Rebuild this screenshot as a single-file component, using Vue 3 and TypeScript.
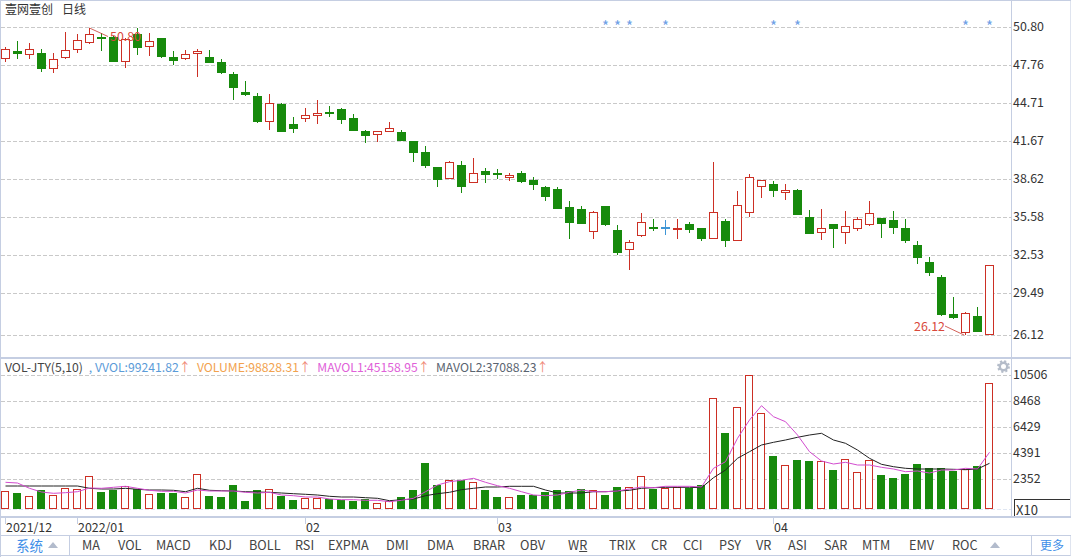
<script setup lang="ts">
type K = [number, number, number, number, string]

const candles: K[] = [
  [46.7,61.7,49.3,58.7,'r'],[41.3,58.7,51,53.7,'g'],[42.7,58.7,49.3,55.3,'r'],[49.3,71.7,53.3,68.7,'g'],[53.3,72.7,59.3,69.3,'r'],
  [32,58.7,49.7,58.3,'r'],[34,52.7,40.3,49.7,'r'],[27.7,44,34.3,42.7,'r'],[33.3,50.7,37,39,'g'],[36,62,37,62,'g'],
  [38,67.7,39.3,62.3,'r'],[28.3,55,34,48,'g'],[33,55.7,41.3,47.3,'r'],[38,57.7,38,56.7,'g'],[51,64.7,57,61,'g'],
  [50,60,54.3,58.7,'r'],[48.7,76.7,51.3,54.3,'r'],[50,63.3,57,62.7,'g'],[59.3,74,62,72.7,'g'],[72,99.7,74,87.7,'g'],
  [81.3,95.7,92,95,'g'],[93.3,122.7,96.3,121.7,'g'],[94.3,129.7,103.3,122.3,'r'],[103.3,132,104,131.7,'g'],[117.3,132.7,124,128.7,'g'],
  [108.3,121.7,115.3,118.7,'r'],[100,124,113,116.3,'r'],[106,117.3,112,112.7,'g'],[107.7,124,109.3,119.7,'g'],[114,130.7,118,130.7,'g'],
  [130,142.7,131,136,'g'],[131,141.7,131.3,135.3,'r'],[121.7,131.7,128.3,131.7,'r'],[130,141,132,140.7,'g'],[141.3,161.7,141.3,152.7,'g'],
  [145.7,168.3,152,165.7,'g'],[167.3,186.7,167.3,180,'g'],[161,179,162.3,178.7,'r'],[161,192.7,165,186.7,'g'],[158.3,182.7,172.7,182.7,'r'],
  [168.3,182.7,171,175,'g'],[169.3,179.3,173.3,175,'g'],[172.7,180.7,175.3,177.7,'r'],[170.7,182.7,172.7,182,'g'],[176.7,190,180,185,'g'],
  [186,201,187,196.7,'g'],[187.3,209,189.3,209,'g'],[201,239,207,222.7,'g'],[206,224,209,224,'g'],[211,238.7,212.3,232.3,'r'],
  [206,226,206,225,'g'],[225,255,230.3,252.7,'g'],[240,270,242.3,250.3,'r'],[212.7,236.7,222.3,236.3,'r'],[219.3,230.7,227.3,228.3,'g'],
  [220.3,235,227.3,228.3,'b'],[219,238.7,228.3,230.3,'r'],[222,233.3,224,229.7,'g'],[228,241,228,239,'g'],[161.7,239.3,212.3,239,'r'],
  [219.3,246.7,221,240.7,'g'],[191,240.7,205.3,240.7,'r'],[174.3,216.7,177.3,212.7,'r'],[180,198,180.3,187.3,'r'],[181.3,196.7,184,190.7,'g'],
  [184.3,200,190.3,192.7,'r'],[189.3,215,190,214.7,'g'],[210,234.3,217.3,233.7,'g'],[209,239.7,228.3,232.7,'r'],[224,247.7,224,228.7,'g'],
  [211,243.7,226.3,233.3,'r'],[217.3,230.7,219.3,228.7,'r'],[201,225.7,213.3,225.3,'r'],[218,238,218,223.7,'g'],[211,234.3,220,227.7,'g'],
  [219,242.7,228,240.7,'g'],[241.3,263.7,245,257.7,'g'],[257.3,275.7,262,272.7,'g'],[275.3,315.7,277,314.7,'g'],[297.3,319.3,314,318,'g'],
  [311.7,335,313.3,333.3,'r'],[307,331.7,316,331.7,'g'],[265.3,335.3,265.3,335.3,'r']
]

const volTops = [
  491,493,496.3,490,495,488.3,489.3,476.3,491.7,490,486.3,489,494,493,493,497.3,474.3,496,497,485,
  501,490,489.3,496,500,498.3,498.3,499,500,501,499.3,503.3,501,497,490,463,485,480.3,480.3,482.3,
  490,497,497.3,495,495,492,490,491.3,489,490.3,495,487,487.3,476.3,489,488.3,486.7,488,485,398.3,
  433,407.3,375.3,413.3,456,465.3,460,461,461.3,470,459.3,472.3,460.3,475,478,474,464,468,468,471,
  469,466,383
]

const mavol1 = [
  382,384,400,411,415,413,410,399,400,397,394,400,406,409,409,414,405,408,408,408,412,414,412,420,422,426,426,432,434,434,
  436,436,440,436,430,410,390,380,376,370,382,392,400,410,420,422,420,412,405,410,410,408,402,396,398,394,394,394,396,340,
  320,250,195,152,185,200,240,290,318,327,322,330,330,337,342,350,348,354,345,345,340,342,292
]
const mavol2 = [
  393,393,393,393,393,393,393,400,402,402,400,403,405,405,406,410,400,406,407,408,410,411,412,414,416,418,420,424,426,426,
  428,430,437,434,432,422,416,412,404,400,396,396,394,394,394,405,414,414,414,410,410,408,406,400,398,397,397,397,398,368,
  345,310,290,270,262,255,247,240,235,255,265,285,310,328,335,340,342,342,342,343,344,342,325
]

const cx = (i: number) => 5 + 12 * i
const snap = (v: number) => Math.round(v)

const candleRects = candles.map((c, i) => {
  const [hi, lo, top, bot, kind] = c
  const t = snap(top)
  const b = Math.max(snap(bot), t + 2)
  return {
    i,
    kind,
    hollow: kind === 'r',
    wy: snap(hi),
    wh: Math.max(snap(lo) - snap(hi), 1),
    x: cx(i) - 4,
    y: t,
    h: b - t
  }
})

const isRedVol = (i: number) => candles[i][4] !== 'g' || i === 55
const volBars = volTops.map((t, i) => ({ i, y: snap(t), h: 509 - snap(t), hollow: isRedVol(i), x: cx(i) - 4 }))

const toLine = (arr: number[]) => arr.map((p, i) => `${cx(i) + 0.5},${(355 + p / 3).toFixed(1)}`).join(' ')
const line1 = toLine(mavol1)
const line2 = toLine(mavol2)

const priceGrid = [27.5, 65.5, 103.5, 141.5, 179.5, 217.5, 255.5, 293.5, 335.5]
const volGrid = [375.5, 401.5, 427.5, 453.5, 479.5]
const stars = [605, 617, 629, 665, 773, 797, 965, 989]
const priceTicks = ['50.80', '47.76', '44.71', '41.67', '38.62', '35.58', '32.53', '29.49']
const volTicks = ['10506', '8468', '6429', '4391', '2352']

const dates = [
  { label: '2021/12', w: 72 },
  { label: '2022/01', w: 228 },
  { label: '02', w: 192 },
  { label: '03', w: 276 },
  { label: '04', w: 100 }
]
const tabLabels = ['MA','VOL','MACD','KDJ','BOLL','RSI','EXPMA','DMI','DMA','BRAR','OBV','WR','TRIX','CR','CCI','PSY','VR','ASI','SAR','MTM','EMV','ROC']
const tabStarts = [83,119,157,210,250,296,329,387,428,474,521,569,610,652,684,720,757,789,825,863,910,953,991]
const tabs = tabLabels.map((label, i) => ({ label, w: tabStarts[i + 1] - tabStarts[i] }))
</script>

<template>
  <div class="app">
    <section class="pane price-pane">
      <div class="plot">
        <div class="title"><span>壹网壹创</span><span>日线</span></div>
        <svg class="chart" width="1010" height="356" viewBox="1 1 1010 356">
          <line v-for="y in priceGrid" :key="y" x1="1" x2="1011" :y1="y" :y2="y" class="grid" />
          <text v-for="x in stars" :key="x" :x="x + 0.5" y="32" class="star">*</text>
          <g shape-rendering="crispEdges">
            <g v-for="c in candleRects" :key="c.i">
              <rect v-if="c.i !== 82" :x="c.x + 4" :y="c.wy" width="1" :height="c.wh" :class="'fill-' + c.kind" />
              <rect :x="c.x" :y="c.y" width="9" :height="c.h" :class="'fill-' + c.kind" />
              <rect v-if="c.hollow" :x="c.x + 1" :y="c.y + 1" width="7" :height="c.h - 2" class="fill-w" />
            </g>
          </g>
          <polyline points="89.5,28 108,36.5" class="note-line" />
          <text x="110" y="41" class="note">50.80</text>
          <polyline points="945,326 964,335" class="note-line" />
          <text x="914" y="331" class="note">26.12</text>
        </svg>
      </div>
      <div class="axis price-axis">
        <div v-for="t in priceTicks" :key="t" class="tick">{{ t }}</div>
        <div class="tick last">26.12</div>
      </div>
    </section>

    <section class="pane vol-pane">
      <div class="plot">
        <div class="legend">
          <span class="l0">VOL-JTY(5,10)</span>
          <span class="l1">, VVOL:99241.82<i>↑</i></span>
          <span class="l2">VOLUME:98828.31<i>↑</i></span>
          <span class="l3">MAVOL1:45158.95<i>↑</i></span>
          <span class="l4">MAVOL2:37088.23<i>↑</i></span>
          <svg class="gear" width="13" height="13" viewBox="0 0 13 13">
            <circle cx="6.5" cy="6.5" r="3.7" fill="none" stroke="#b4bcc9" stroke-width="2.4" />
            <circle cx="6.5" cy="6.5" r="5.4" fill="none" stroke="#b4bcc9" stroke-width="2" stroke-dasharray="2.1 2.14" />
          </svg>
        </div>
        <svg class="chart" width="1010" height="141" viewBox="1 375 1010 141">
          <line v-for="y in volGrid" :key="y" x1="1" x2="1011" :y1="y" :y2="y" class="grid" />
          <line x1="1" x2="1011" y1="509.5" y2="509.5" class="grid faint" />
          <g shape-rendering="crispEdges">
            <g v-for="b in volBars" :key="b.i">
              <rect :x="b.x" :y="b.y" width="8" :height="b.h" :class="b.hollow ? 'fill-r' : 'fill-g'" />
              <rect v-if="b.hollow" :x="b.x + 1" :y="b.y + 1" width="6" :height="b.h - 2" class="fill-w" />
            </g>
          </g>
          <polyline :points="line2" class="ma2" />
          <polyline :points="line1" class="ma1" />
        </svg>
      </div>
      <div class="axis vol-axis">
        <div v-for="t in volTicks" :key="t" class="tick">{{ t }}</div>
        <div class="x10">X10</div>
      </div>
    </section>

    <div class="dates">
      <div v-for="d in dates" :key="d.label" class="date" :style="{ width: d.w + 'px' }">{{ d.label }}</div>
    </div>

    <nav class="tabbar">
      <div class="sys"><span>系统</span><b class="tri"></b></div>
      <div class="tabs">
        <span v-for="t in tabs" :key="t.label" class="tab" :style="{ width: t.w + 'px' }">
          <template v-if="t.label === 'WR'">W<u>R</u></template>
          <template v-else>{{ t.label }}</template>
        </span>
        <b class="tri"></b>
      </div>
      <div class="more">更多</div>
    </nav>
  </div>
</template>

<style>
html, body { margin: 0; background: #fff; }
</style>

<style scoped>
.app {
  width: 1071px;
  height: 557px;
  box-sizing: border-box;
  display: flex;
  flex-direction: column;
  background: #fff;
  border-left: 1px solid #c5cee2;
  border-top: 1px solid #c5cee2;
  font-family: "Noto Sans CJK SC", "Noto Sans", sans-serif;
  font-size: 12.4px;
  color: #333;
  overflow: hidden;
}
.pane { display: flex; }
.price-pane { height: 356px; border-bottom: 2px solid #c5cee2; }
.vol-pane { height: 157px; border-bottom: 2px solid #c5cee2; }
.plot { position: relative; width: 1010px; flex: none; }
.chart { display: block; }
.title {
  position: absolute;
  left: 4px;
  top: 0;
  display: flex;
  gap: 9px;
  line-height: 16px;
  font-size: 12px;
}
.grid { stroke: #c9c9c9; stroke-width: 1; stroke-dasharray: 4 2; }
.grid.faint { stroke: #dfe6f2; }
.star { font-size: 15px; fill: #6f9fe6; text-anchor: middle; }
.note { font-size: 12.4px; fill: #d9483b; }
.note-line { fill: none; stroke: #c8392f; stroke-width: 0.8; }
.fill-r { fill: #cc2f24; }
.fill-g { fill: #178a0c; }
.fill-b { fill: #3f96d6; }
.fill-w { fill: #fff; }
.ma1 { fill: none; stroke: #d24ccf; stroke-width: 1; }
.ma2 { fill: none; stroke: #222; stroke-width: 1; }
.axis {
  flex: 1;
  display: flex;
  flex-direction: column;
  border-left: 1px solid #c5cee2;
  border-right: 1px solid #dfe4ef;
  padding-left: 1px;
}
.tick { display: flex; align-items: center; flex: none; }
.price-axis { padding-top: 6px; }
.price-axis .tick { height: 38px; }
.price-axis .tick.last { margin-top: 4px; }
.vol-axis { padding-top: 2px; }
.vol-axis .tick { height: 26px; }
.x10 {
  margin-top: auto;
  height: 17px;
  line-height: 19px;
  box-sizing: border-box;
  margin-left: 1px;
  padding-left: 1px;
  border-top: 1px solid #333;
  border-left: 1px solid #333;
  font-size: 13px;
}
.legend {
  height: 16px;
  display: flex;
  align-items: center;
  padding-left: 4px;
  white-space: nowrap;
  gap: 6px;
  font-size: 12.2px;
}
.legend i { font-style: normal; color: #f08a78; }
.l0 { color: #444; }
.l1 { color: #5b9bd8; }
.l2 { color: #f2a24e; }
.l3 { color: #e05fd8; }
.l4 { color: #5a6470; }
.gear { margin-left: auto; margin-right: 1px; margin-top: -2px; }
.dates {
  height: 18px;
  display: flex;
  padding-left: 4px;
  border-bottom: 1px solid #c5cee2;
  box-sizing: border-box;
}
.date { position: relative; box-sizing: border-box; padding: 1px 0 0 1px; line-height: 17px; flex: none; }
.date::before {
  content: "";
  position: absolute;
  left: 0;
  top: 0;
  height: 6px;
  width: 1px;
  background: #c5cee2;
}
.tabbar {
  height: 20px;
  display: flex;
  align-items: center;
  border-bottom: 1px solid #c5cee2;
  border-right: 1px solid #dfe4ef;
  box-sizing: border-box;
}
.sys {
  width: 69px;
  height: 100%;
  box-sizing: border-box;
  display: flex;
  align-items: center;
  padding: 0 0 2px 15px;
  gap: 5px;
  color: #3f8fe8;
  font-size: 13.5px;
  border-right: 1px solid #c5cee2;
}
.tri {
  flex: none;
  width: 0;
  height: 0;
  border-left: 5px solid transparent;
  border-right: 5px solid transparent;
  border-bottom: 6px solid #b2bbcc;
}
.tabs {
  flex: 1;
  display: flex;
  align-items: center;
  padding: 0 0 2px 12px;
  font-size: 12.7px;
  color: #444;
  white-space: nowrap;
}
.tab { flex: none; }
.more {
  width: 39px;
  height: 100%;
  box-sizing: border-box;
  border-left: 1px solid #c5cee2;
  display: flex;
  align-items: center;
  padding: 0 0 2px 8px;
  font-size: 12px;
  color: #3f8fe8;
}
</style>
